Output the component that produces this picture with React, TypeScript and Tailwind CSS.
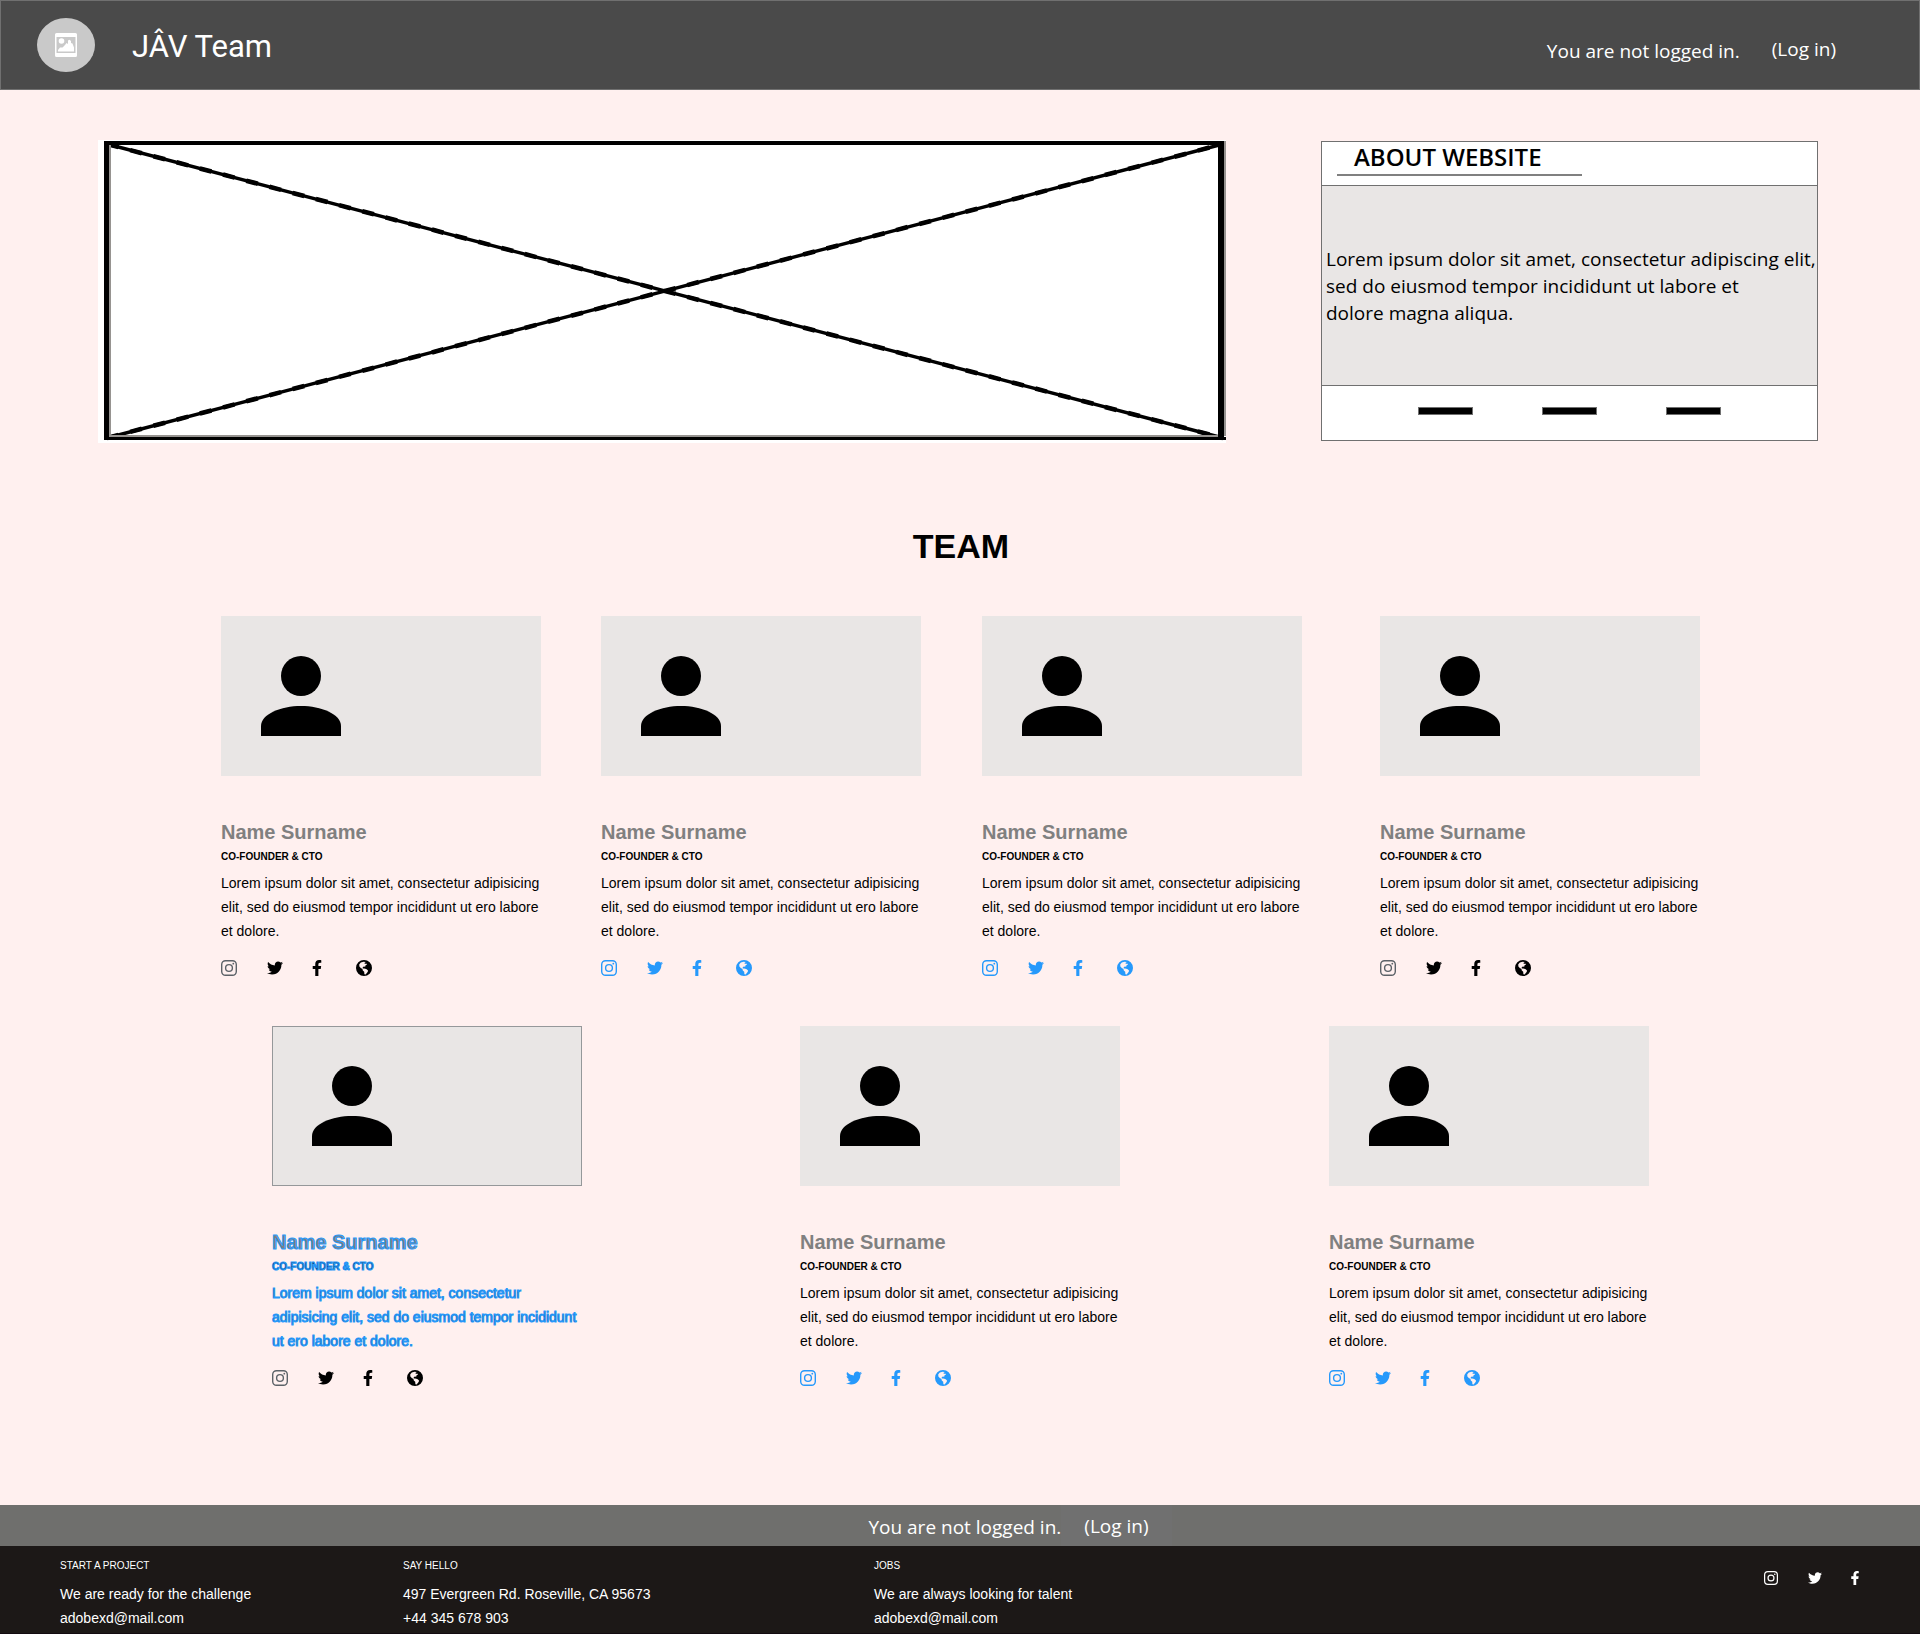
import type { ReactNode } from "react";
import { FaFacebookF, FaTwitter } from "react-icons/fa";

const arial = "font-['Liberation_Sans',Arial,sans-serif]";
const humanist = "font-['Open_Sans','Noto_Sans',sans-serif]";

type Tone = "dark" | "blue";

type Member = {
  id: number;
  tone: Tone;
  highlighted?: boolean;
};

const firstRow: Member[] = [
  { id: 1, tone: "dark" },
  { id: 2, tone: "blue" },
  { id: 3, tone: "blue" },
  { id: 4, tone: "dark" },
];

const secondRow: Member[] = [
  { id: 5, tone: "dark", highlighted: true },
  { id: 6, tone: "blue" },
  { id: 7, tone: "blue" },
];

function InstagramIcon({ className = "" }: { className?: string }) {
  return (
    <svg viewBox="0 0 16 16" className={className} fill="none" stroke="currentColor" aria-hidden="true">
      <rect x="0.7" y="0.7" width="14.6" height="14.6" rx="3.8" strokeWidth="1.4" />
      <circle cx="8" cy="8" r="3.4" strokeWidth="1.4" />
      <circle cx="12.3" cy="3.7" r="0.9" fill="currentColor" stroke="none" />
    </svg>
  );
}

function GlobeIcon({ className = "" }: { className?: string }) {
  return (
    <svg viewBox="0 0 16 16" className={className} fill="currentColor" aria-hidden="true">
      <path
        fillRule="evenodd"
        d="M8 0a8 8 0 1 1 0 16A8 8 0 0 1 8 0ZM4.800 2.600 3.200 4.600 3.400 6.400 5 8.200 6.400 8.800 6.800 10.400 8.200 11.800 8.400 14.200 9.600 14.400 11.800 11.800 11.900 10.200 10.200 9 8.200 8.400 7 8.400 6.600 7.400 7.800 6.600 9.200 6.800 9.400 5.600 11 4.600 10.200 3.400 9 4 8.400 3 9.800 2 7.600 1.700Z"
      />
    </svg>
  );
}

function LogoIcon() {
  return (
    <svg viewBox="0 0 22 24" className="h-6 w-[22px]" aria-hidden="true">
      <path
        fill="#fff"
        fillRule="evenodd"
        d="M1.5 0h19A1.5 1.5 0 0 1 22 1.5v21a1.5 1.5 0 0 1-1.5 1.5h-19A1.5 1.5 0 0 1 0 22.5v-21A1.5 1.5 0 0 1 1.5 0ZM1.5 4v16h19V4Z"
      />
      <circle cx="6.5" cy="8" r="2.8" fill="#fff" />
      <path fill="#fff" d="M3 18.500v-1.500l2-2.500h2.500L10 12l1.500-2 1.500 1V7.500l1.500-.8 1.500 1.300v2l1.500.5 1.500 4v4Z" />
    </svg>
  );
}

function PersonIcon() {
  return (
    <svg viewBox="0 0 80 80" className="size-20" aria-hidden="true">
      <circle cx="40" cy="20" r="20" />
      <path d="M0 80V70C0 58 20 50 40 50S80 58 80 70V80Z" />
    </svg>
  );
}

function Placeholder() {
  return (
    <svg viewBox="0 0 1128 303" className="block h-auto w-full" role="img" aria-label="Banner placeholder">
      <rect width="1128" height="303" fill="#fff" />
      <g stroke="#000" fill="none">
        <path d="M9 4L1125 298M9 298L1125 4" strokeWidth="3.4" />
        <path d="M9 4L1125 298M9 298L1125 4" strokeWidth="4.6" strokeDasharray="12 12" />
      </g>
      <path fill="#969390" d="M11 5h2v290h-2ZM1126 1h2v295h-2ZM11 295h1109v2H11Z" />
      <path d="M6 1h1119v4H6ZM6 1h5v299H6ZM1120 1h6v299h-6ZM6 297h1122v3H6Z" />
    </svg>
  );
}

function IconLink({ label, className = "", children }: { label: string; className?: string; children: ReactNode }) {
  return (
    <a href="#" aria-label={label} className={className}>
      {children}
    </a>
  );
}

function MemberCard({ member }: { member: Member }) {
  const { highlighted } = member;
  const blue = member.tone === "blue";
  const outline = highlighted ? "[-webkit-text-stroke:1px_#2699fb]" : "";
  return (
    <article className={highlighted ? "w-full max-w-[310px]" : "w-full max-w-[320px]"}>
      <div
        className={
          highlighted
            ? "flex h-40 items-center border border-[#95989a] bg-[#e9e6e5] pl-[39px]"
            : "flex h-40 items-center bg-[#e9e6e5] pl-10"
        }
      >
        <PersonIcon />
      </div>
      <h3 className={`mt-11 text-[20px] leading-6 font-bold text-[#808080] ${outline}`}>Name Surname</h3>
      <p className={`mt-[5px] text-[10px] leading-4 font-bold ${outline}`}>CO-FOUNDER &amp; CTO</p>
      <p className={`mt-1.5 text-sm leading-6 ${outline}`}>
        Lorem ipsum dolor sit amet, consectetur adipisicing elit, sed do eiusmod tempor incididunt ut ero labore et
        dolore.
      </p>
      <div className={`mt-[17px] flex h-4 items-center ${blue ? "text-[#2699fb]" : "text-black"}`}>
        <IconLink label="Instagram" className={blue ? "" : "text-[#5c6268]"}>
          <InstagramIcon className="size-4" />
        </IconLink>
        <IconLink label="Twitter" className="ml-[30px]">
          <FaTwitter className="size-4" />
        </IconLink>
        <IconLink label="Facebook" className="ml-[26px]">
          <FaFacebookF className="size-4" />
        </IconLink>
        <IconLink label="Website" className="ml-[31px]">
          <GlobeIcon className="size-4" />
        </IconLink>
      </div>
    </article>
  );
}

function FooterColumn({ title, lines, className = "" }: { title: string; lines: string[]; className?: string }) {
  return (
    <div className={className}>
      <h4 className="text-[10px] leading-4">{title}</h4>
      <div className="mt-2 text-sm leading-6">
        {lines.map((line) => (
          <p key={line}>{line}</p>
        ))}
      </div>
    </div>
  );
}

export default function App() {
  return (
    <div className={`min-h-screen bg-[#fff0ef] text-black ${arial}`}>
      <header className="flex h-[90px] items-center border border-[#707070] bg-[#4a4a4a] pr-[83px] pl-9 text-white">
        <div className="flex h-[54px] w-[58px] items-center justify-center rounded-[50%] bg-[#c9c9c9]">
          <LogoIcon />
        </div>
        <h1 className="ml-[37px] pt-1 font-['Roboto',sans-serif] text-[31px] leading-10">JÂV Team</h1>
        <div className={`ml-auto flex gap-8 pt-2.5 text-[19px] leading-7 ${humanist}`}>
          <span className="pt-0.5">You are not logged in.</span>
          <button type="button" className="self-start">
            (Log in)
          </button>
        </div>
      </header>

      <main>
        <section className="grid grid-cols-[minmax(0,1128fr)_minmax(0,497fr)] gap-[95px] pt-[50px] pr-[102px] pl-[98px]">
          <Placeholder />
          <aside className={`mt-px flex h-[300px] flex-col border border-[#707070] bg-white ${humanist}`}>
            <div className="h-11 border-b border-[#707070] pl-[15px]">
              <h2 className="w-[245px] border-b-2 border-[#808080] pb-0.5 pl-[17px] text-[24px] leading-[30px] font-semibold">
                ABOUT WEBSITE
              </h2>
            </div>
            <div className="flex flex-1 items-center bg-[#e9e6e5] pt-0.5 pl-1">
              <p className="text-[19px] leading-[27px]">
                Lorem ipsum dolor sit amet, consectetur adipiscing elit,
                <br />
                sed do eiusmod tempor incididunt ut labore et
                <br />
                dolore magna aliqua.
              </p>
            </div>
            <div className="flex h-[55px] items-start justify-center gap-[69px] border-t border-[#707070] pt-[21px]">
              <span className="h-2 w-[55px] border border-[#707070] bg-black" />
              <span className="h-2 w-[55px] border border-[#707070] bg-black" />
              <span className="h-2 w-[55px] border border-[#707070] bg-black" />
            </div>
          </aside>
        </section>

        <section className="pb-[119px]">
          <h2 className="mt-[83px] pl-0.5 text-center text-[34px] leading-10 font-bold">TEAM</h2>
          <div className="mx-auto mt-[50px] grid w-full max-w-[1480px] grid-cols-[380fr_381fr_398fr_320fr] pl-px">
            {firstRow.map((member) => (
              <MemberCard key={member.id} member={member} />
            ))}
          </div>
          <div className="mx-auto mt-[50px] grid w-full max-w-[1378px] grid-cols-[528fr_529fr_320fr] pl-px">
            {secondRow.map((member) => (
              <MemberCard key={member.id} member={member} />
            ))}
          </div>
        </section>
      </main>

      <div
        className={`flex h-[41px] items-center justify-center bg-[#6f6f6d] pl-[120px] text-[19px] leading-7 text-white ${humanist}`}
      >
        <span className="pt-0.5">You are not logged in.</span>
        <button type="button" className="h-full bg-[#707070] px-[23px]">
          (Log in)
        </button>
      </div>

      <footer className="flex h-[88px] border-b border-[#120a10] bg-[#1c1817] pt-3 pr-[58px] pl-[60px] text-white">
        <FooterColumn
          className="w-[343px]"
          title="START A PROJECT"
          lines={["We are ready for the challenge", "adobexd@mail.com"]}
        />
        <FooterColumn
          className="w-[471px]"
          title="SAY HELLO"
          lines={["497 Evergreen Rd. Roseville, CA 95673", "+44 345 678 903"]}
        />
        <FooterColumn title="JOBS" lines={["We are always looking for talent", "adobexd@mail.com"]} />
        <div className="ml-auto flex items-start gap-[30px] pt-[13px]">
          <IconLink label="Instagram">
            <InstagramIcon className="size-3.5" />
          </IconLink>
          <IconLink label="Twitter">
            <FaTwitter className="size-3.5" />
          </IconLink>
          <IconLink label="Facebook" className="-ml-1">
            <FaFacebookF className="size-3.5" />
          </IconLink>
        </div>
      </footer>
    </div>
  );
}
